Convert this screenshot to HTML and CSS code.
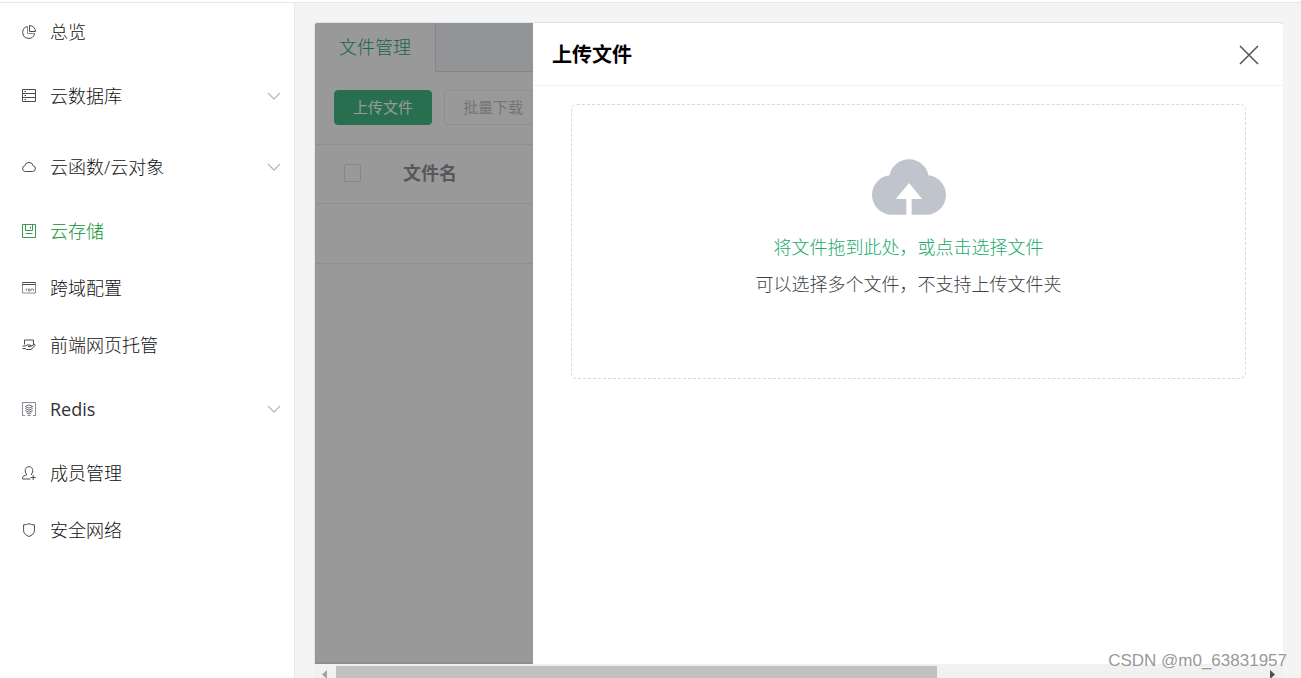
FILE: index.html
```html
<!DOCTYPE html>
<html lang="zh-CN">
<head>
<meta charset="utf-8">
<title>云存储</title>
<link rel="stylesheet" href="styles.css">
</head>
<body>
<div class="topline"></div>
<div class="layout">
  <nav class="sidebar" aria-label="主菜单">
    <a class="item" href="#overview"><svg class="icon" viewBox="0 0 14 14"><path d="M5.500 1.500a6 6 0 1 0 7 7.500"/><path d="M7.500.500v6h6A6 6 0 0 0 7.500.500z"/><path class="faint" d="M5.500 1.500v7h7.500"/></svg><span>总览</span></a>
    <button class="item group" type="button"><svg class="icon" viewBox="0 0 14 14"><path d="M.5.5h13v12H.5zM.5 4.5h13M.5 8.5h13M2.5 2.5h1.5M2.5 6.5h1.5M2.5 10.5h1.5"/></svg><span>云数据库</span><svg class="chevron" viewBox="0 0 14 8"><path d="M1 1l6 6 6-6"/></svg></button>
    <button class="item group" type="button"><svg class="icon" viewBox="0 0 14 14"><path d="M3.300 11.500a2.900 2.900 0 0 1-.500-5.700 4.300 4.300 0 0 1 8.400 0 2.900 2.900 0 0 1-.500 5.700z"/></svg><span>云函数/云对象</span><svg class="chevron" viewBox="0 0 14 8"><path d="M1 1l6 6 6-6"/></svg></button>
    <a class="item active" href="#storage" aria-current="page"><svg class="icon" viewBox="0 0 14 14"><path d="M.5.500h13v13H.5zM3.500.500v6h7v-6M8.500 2.500v2M3.500 9.500h7"/></svg><span>云存储</span></a>
    <a class="item" href="#cors"><svg class="icon" viewBox="0 0 14 14"><path class="faint" d="M.5 1.500h13v10.500H.5z"/><path d="M.5 1.500h13M.5 3.500h13"/><path class="faint" d="M4 10V8h1.500M6.500 8h1.500v2H6.500zM9 10V8h2.500v2"/></svg><span>跨域配置</span></a>
    <a class="item" href="#hosting"><svg class="icon" viewBox="0 0 14 14"><path d="M2.500 6.500V2h9v5M.5 8h2.500l2-1h3.500v1.500H6M8.500 8.500l3.800-2.200 1 1-4.300 4.200H4.500L3 10.500H.5"/></svg><span>前端网页托管</span></a>
    <button class="item group" type="button"><svg class="icon" viewBox="0 0 14 14"><path class="faint" d="M3 13.500H.5V.5h13v13H11M5.500 13.500h3"/><path class="fine" d="M7 2.800l3.700 1.700L7 6.200 3.300 4.500zM3.300 6.500L7 8.200l3.700-1.700M3.300 8.500L7 10.200l3.700-1.700M4.500 10.800L7 12l2.500-1.200"/></svg><span class="latin">Redis</span><svg class="chevron" viewBox="0 0 14 8"><path d="M1 1l6 6 6-6"/></svg></button>
    <a class="item" href="#members"><svg class="icon" viewBox="0 0 14 14"><path d="M8.500 13H.6v-1.500C.6 10 3 9.700 4.500 9V8C2.500 6 2.700.7 7 .7s4.500 5.300 2.500 7.300v1M11.200 9v5M8.700 11.500h5"/></svg><span>成员管理</span></a>
    <a class="item" href="#security"><svg class="icon" viewBox="0 0 14 14"><path d="M7 .6c1.500.9 3.500 1.200 5.400 1.200v6c0 2.700-2.600 4.600-5.400 5.700C4.200 12.400 1.600 10.500 1.600 7.800v-6C3.500 1.800 5.500 1.500 7 .6z"/></svg><span>安全网络</span></a>
  </nav>
  <main class="main">
    <div class="card">
      <section class="files" aria-label="文件管理">
        <div class="tabs"><button class="tab" type="button">文件管理</button></div>
        <div class="toolbar">
          <button class="btn primary" type="button">上传文件</button>
          <button class="btn" type="button" disabled>批量下载</button>
        </div>
        <table class="table">
          <thead><tr><th class="pick"><input type="checkbox" aria-label="全选"></th><th>文件名</th></tr></thead>
          <tbody><tr><td colspan="2"></td></tr></tbody>
        </table>
      </section>
      <div class="mask"></div>
      <section class="drawer" role="dialog" aria-labelledby="drawer-title">
        <header class="drawer-head">
          <h2 id="drawer-title">上传文件</h2>
          <button class="close" type="button" aria-label="关闭"><svg viewBox="0 0 20 20"><path d="M1 1l18 18M19 1L1 19"/></svg></button>
        </header>
        <div class="drawer-body">
          <button class="dropzone" type="button">
            <svg class="cloud" viewBox="64 192 896 672"><path d="M544 864V672h128L512 480 352 672h128v192H320v-1.600c-5.376.320-10.496 1.600-16 1.600A240 240 0 0 1 64 624c0-123.136 93.120-223.488 212.608-237.248A239.808 239.808 0 0 1 512 192a239.872 239.872 0 0 1 235.456 194.752c119.488 13.760 212.480 114.112 212.480 237.248a240 240 0 0 1-240 240c-5.376 0-10.560-1.280-16-1.600v1.600H544z"/></svg>
            <span class="hint">将文件拖到此处，或点击选择文件</span>
            <span class="note">可以选择多个文件，不支持上传文件夹</span>
          </button>
        </div>
      </section>
    </div>
    <div class="scrollbar">
      <svg class="arrow" viewBox="0 0 5 9"><path d="M5 0v9L0 4.500z"/></svg>
      <div class="track"><div class="thumb"></div></div>
      <svg class="arrow next" viewBox="0 0 5 9"><path d="M0 0v9l5-4.500z"/></svg>
    </div>
  </main>
</div>
<div class="watermark">CSDN @m0_63831957</div>
</body>
</html>
```
FILE: styles.css
```css
* { box-sizing: border-box; }
body {
  margin: 0;
  height: 100vh;
  overflow: hidden;
  display: flex;
  flex-direction: column;
  background: #fff;
  color: #111;
  font: 300 18px/24px "Open Sans", "Noto Sans CJK SC", sans-serif;
}
button { font: inherit; color: inherit; background: none; border: 0; padding: 0; }
a { color: inherit; text-decoration: none; }
svg { display: block; flex: none; }
.topline { flex: none; height: 3px; border-bottom: 1px solid #e8e8e8; }
.layout { flex: 1; min-height: 0; display: flex; }

.sidebar {
  flex: none;
  width: 295px;
  border-right: 1px solid #e8e8e8;
  display: flex;
  flex-direction: column;
}
.item {
  height: 57px;
  padding: 0 13px 0 22px;
  display: flex;
  align-items: center;
  gap: 14px;
  text-align: left;
}
.group { height: 71px; }
.item span { flex: 1; }
.latin { font-weight: 400; color: #303133; }
.active { color: #0c9130; }
.icon { width: 14px; height: 14px; fill: none; stroke: #484a50; overflow: visible; }
.active .icon { stroke: #3a9a50; }
.icon .faint { stroke: #8a8a94; }
.fine { stroke-width: 0.8; }
.chevron { width: 14px; height: 8px; fill: none; stroke: #bbb; stroke-width: 1.4; }

.main {
  flex: 1;
  min-width: 0;
  padding: 19px 18px 0 19px;
  background: #f4f4f4;
  display: flex;
  flex-direction: column;
}
.card {
  flex: 1;
  position: relative;
  overflow: hidden;
  background: #fff;
  border: 1px solid #dbe3f0;
  border-width: 1px 0 0 1px;
  border-radius: 3px 3px 0 0;
}
.files { height: 100%; border-bottom: 2px solid #ebeef5; }
.tabs { height: 49px; display: flex; background: #f5f7fa; border-bottom: 1px solid #dcdfe6; }
.tab {
  width: 121px;
  height: 49px;
  padding-bottom: 2px;
  background: #fff;
  border-right: 1px solid #dcdfe6;
  color: #2cac70;
}
.toolbar { display: flex; gap: 12px; padding: 18px 19px 19px; }
.btn {
  height: 35px;
  padding: 0 18px 2px;
  border: 1px solid #ebeef5;
  border-radius: 4px;
  font-size: 15px;
  font-weight: 400;
  white-space: nowrap;
  color: #c0c4cc;
}
.primary { background: #42b983; border-color: #42b983; color: #fff; }
.table { width: 100%; border-collapse: collapse; border-top: 1px solid #ebeef5; }
.table th, .table td { height: 60px; padding: 0; border-bottom: 1px solid #ebeef5; text-align: left; }
.table th { height: 59px; padding-bottom: 2px; color: #909399; font-weight: 700; }
.table .pick { width: 88px; padding-left: 29px; }
.pick input {
  display: block;
  appearance: none;
  width: 17px;
  height: 18px;
  margin: 0;
  border: 1px solid #dcdfe6;
  border-radius: 2px;
}
.mask { position: absolute; inset: 0; background: rgba(0, 0, 0, 0.4); }

.drawer { position: absolute; inset: 0 0 0 218px; background: #fff; }
.drawer-head {
  height: 63px;
  padding: 1px 24px 0 19px;
  display: flex;
  align-items: center;
  justify-content: space-between;
  border-bottom: 1px solid #f2f2f2;
}
.drawer-head h2 { margin: 0; font-size: 20px; font-weight: 700; color: #000; }
.close svg { width: 20px; height: 20px; fill: none; stroke: #55585e; stroke-width: 1.6; }
.drawer-body { padding: 18px 37px 0 38px; }
.dropzone {
  width: 100%;
  min-height: 275px;
  padding: 54px 16px 75px;
  border: 1px dashed #d9d9d9;
  border-radius: 6px;
  display: flex;
  flex-direction: column;
  align-items: center;
  line-height: 37px;
  color: #404246;
}
.cloud { width: 74px; height: 56px; margin-bottom: 14px; fill: #c0c4cc; }
.hint { color: #22a96b; }

.scrollbar {
  flex: none;
  height: 14px;
  padding: 2px 8px 0;
  background: #f1f1f1;
  display: flex;
  gap: 9px;
}
.arrow { width: 5px; height: 9px; margin-top: 4px; fill: #a3a3a3; }
.next { fill: #505050; }
.track { flex: 1; }
.thumb { width: 65%; height: 100%; background: #c1c1c1; }
.watermark {
  position: absolute;
  right: 14px;
  bottom: 5px;
  font: 17px/24px "Liberation Sans", Arial, sans-serif;
  color: #999;
  text-shadow: -1px -1px 0 #fff;
}
```
